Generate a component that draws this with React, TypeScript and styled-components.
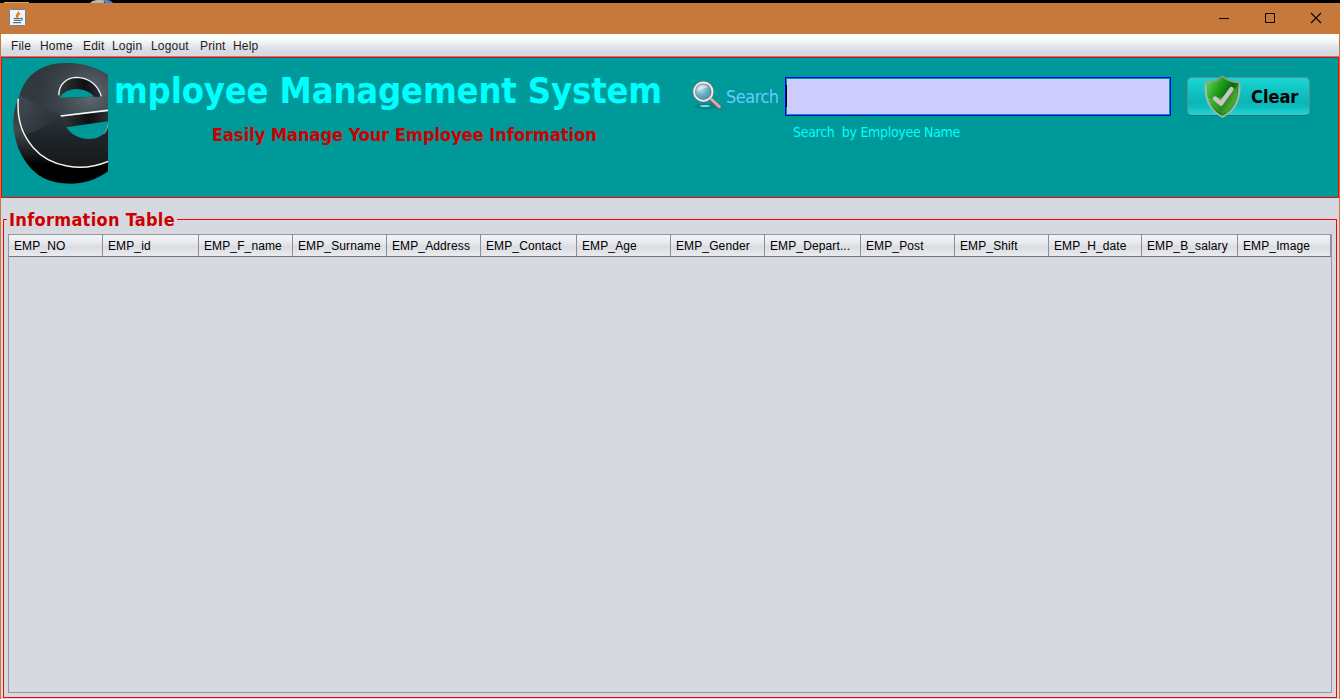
import React from "react";
import styled, { createGlobalStyle } from "styled-components";

const GlobalStyle = createGlobalStyle`
  * { box-sizing: border-box; }
  body { margin: 0; background: #000; overflow: hidden; }
`;

const tahoma = `"DejaVu Sans Condensed", "DejaVu Sans", sans-serif`;
const arial = `"Liberation Sans", Arial, sans-serif`;

const Desktop = styled.div`
  width: 1340px;
  height: 699px;
  padding-top: 3px;
  position: relative;
  background: #000;
`;

const DesktopPeek = styled.svg`
  position: absolute;
  top: 0;
  left: 0;
`;

const Window = styled.div`
  height: 696px;
  display: flex;
  flex-direction: column;
  background: #d6d9df;
  border: solid #c6793b;
  border-width: 0 1px;
`;

const TitleBar = styled.header`
  height: 31px;
  flex: none;
  display: flex;
  align-items: center;
  justify-content: space-between;
  background: #c6793b;
  padding: 0 17px 2px 8px;
`;

const Controls = styled.div`
  display: flex;
  gap: 34px;
`;

const MenuBar = styled.nav`
  height: 23px;
  flex: none;
  display: flex;
  border-bottom: 1px solid #8e8f93;
  background: linear-gradient(#fff 0%, #f6f7f8 30%, #d8dbe1 75%, #d6d9df 100%);
`;

const MenuItem = styled.span<{ $width: number }>`
  width: ${(p) => p.$width}px;
  font: 12px/25px ${arial};
  letter-spacing: 0.18px;
  color: #1c1c1c;
  white-space: nowrap;
  &:first-child { margin-left: 10px; }
`;

const Banner = styled.section`
  height: 141px;
  flex: none;
  display: flex;
  background: #009999;
  border: 1px solid #f00;
  padding: 4px 0 0 10px;
`;

const Heading = styled.div`
  width: 583px;
  padding: 6px 0 0 6px;
`;

const Title = styled.h1`
  margin: 0;
  font: bold 36px/46px ${tahoma};
  letter-spacing: -0.13px;
  color: #0ff;
  white-space: nowrap;
`;

const Subtitle = styled.p`
  margin: 8px 0 0 98px;
  font: bold 18px/26px ${tahoma};
  color: #cc0000;
  white-space: nowrap;
`;

const SearchLabel = styled.label`
  display: flex;
  width: 94px;
  height: 32px;
  margin-top: 17px;
  font: 18px/36px ${tahoma};
  letter-spacing: -0.5px;
  color: #66ccff;
`;

const SearchIcon = styled.svg`
  flex: none;
  margin: 1px 3px 0 0;
`;

const SearchColumn = styled.div`
  width: 386px;
  margin: 15px 16px 0 0;
`;

const SearchField = styled.div`
  height: 39px;
  border: 1px solid #0000f0;
  padding: 1px;
  background: linear-gradient(#ccccff, #ccccff) content-box #009999;
  background-clip: content-box, border-box;
  position: relative;
`;

const Caret = styled.i`
  position: absolute;
  left: 0;
  top: 7px;
  width: 1px;
  height: 22px;
  background: #000;
`;

const Hint = styled.p`
  margin: 6px 0 0 8px;
  font: 14px/20px ${tahoma};
  letter-spacing: -0.3px;
  color: #0ff;
  white-space: pre;
`;

const ClearButton = styled.button`
  width: 123px;
  height: 39px;
  margin-top: 15px;
  padding: 0 0 0 16px;
  display: flex;
  align-items: center;
  border: 1px solid #5d8e90;
  border-bottom-color: #3f6265;
  border-radius: 5px;
  background: linear-gradient(#1bd6d6 0%, #12c6c6 30%, #0db5b5 65%, #10bcbc 78%, #1cdada 100%);
  font: bold 18px/20px ${tahoma};
  color: #000;
`;

const Shield = styled.svg`
  flex: none;
  margin: -1px 10px 0 0;
`;

const Group = styled.fieldset`
  flex: none;
  height: 489px;
  margin: 11px 2px 0;
  padding: 5px 4px 0;
  min-width: 0;
  border: 1px solid #f00;
`;

const GroupTitle = styled.legend`
  width: 170px;
  height: 20px;
  margin-left: -1px;
  padding: 0 0 0 2px;
  font: bold 18px/22px ${tahoma};
  letter-spacing: 0.3px;
  color: #cc0000;
  white-space: nowrap;
`;

const Table = styled.div`
  height: 459px;
  border: 1px solid #9297a1;
`;

const TableHead = styled.div`
  height: 22px;
  display: flex;
  border-bottom: 1px solid #6f737c;
  background: linear-gradient(#f4f5f7 0%, #e4e6ea 45%, #d9dce1 55%, #e9ebef 100%);
`;

const HeadCell = styled.span<{ $width: number }>`
  flex: none;
  width: ${(p) => p.$width}px;
  padding-left: 5px;
  border-right: 1px solid #8b8f97;
  font: 12px/23px ${arial};
  letter-spacing: 0.12px;
  height: 21px;
  color: #000;
  white-space: nowrap;
`;

const menus: [string, number][] = [
  ["File", 29], ["Home", 43], ["Edit", 29], ["Login", 39], ["Logout", 49], ["Print", 33], ["Help", 40],
];

const columns: [string, number][] = [
  ["EMP_NO", 94], ["EMP_id", 96], ["EMP_F_name", 94], ["EMP_Surname", 94], ["EMP_Address", 94],
  ["EMP_Contact", 96], ["EMP_Age", 94], ["EMP_Gender", 94], ["EMP_Depart...", 96], ["EMP_Post", 94],
  ["EMP_Shift", 94], ["EMP_H_date", 93], ["EMP_B_salary", 96], ["EMP_Image", 93],
];

const JavaIcon = () => (
  <svg width="17" height="17" viewBox="0 0 17 17">
    <rect x="0.5" y="0.5" width="16" height="16" rx="1" fill="#f2f3f3" stroke="#6c8497" />
    <path d="M9.5 2.5C10 5 6 5 7.5 8.5M11 4.5C8 6 9 7 8.5 9" fill="none" stroke="#e8791d" strokeWidth="1.4" />
    <path d="M4.5 9.5h7M5 11.4h6M4 13.6h8M11.5 9.2c2.5-.6 2.5 2-.3 2.4" fill="none" stroke="#557793" strokeWidth="1.1" />
  </svg>
);

const LogoDrawing = styled.svg`
  flex: none;
`;

const Logo = () => (
  <LogoDrawing width="96" height="124" viewBox="36 36 288 372">
    <defs>
      <linearGradient id="face" x1="0" y1="0" x2="0" y2="1">
        <stop offset="0" stopColor="#2f373b" />
        <stop offset="0.45" stopColor="#333b41" />
        <stop offset="0.7" stopColor="#1f2529" />
        <stop offset="1" stopColor="#15191c" />
      </linearGradient>
      <linearGradient id="rim" x1="0" y1="0" x2="0" y2="1">
        <stop offset="0" stopColor="#2a3034" />
        <stop offset="0.4" stopColor="#42494b" />
        <stop offset="0.68" stopColor="#151819" />
        <stop offset="0.78" stopColor="#000" />
      </linearGradient>
      <radialGradient id="sheen" gradientUnits="userSpaceOnUse" cx="270" cy="130" r="170">
        <stop offset="0" stopColor="#6b777f" stopOpacity="0.85" />
        <stop offset="1" stopColor="#3a4349" stopOpacity="0" />
      </radialGradient>
      <linearGradient id="wedge" x1="0" y1="0" x2="1" y2="0.3">
        <stop offset="0" stopColor="#454d57" />
        <stop offset="1" stopColor="#2b3238" />
      </linearGradient>
      <linearGradient id="bar" x1="0" y1="0" x2="1" y2="0">
        <stop offset="0" stopColor="#343a3c" />
        <stop offset="0.6" stopColor="#0d0f10" />
        <stop offset="1" stopColor="#2c3133" />
      </linearGradient>
    </defs>
    <path d="M60 135C44 165 38 200 41 235C48 305 85 360 130 384C185 410 265 409 324 364V200H60Z" fill="url(#rim)" />
    <path d="M58 138C75 75 125 39 195 39C250 38 295 54 324 75V333C245 366 150 356 96 292C58 245 50 200 55 150Z" fill="url(#face)" />
    <path d="M58 138C75 75 125 39 195 39C250 38 295 54 324 75V181L182 198Z" fill="url(#sheen)" />
    <path d="M57 136L182 197C150 222 118 240 80 252C58 220 50 180 57 136Z" fill="url(#wedge)" opacity="0.75" />
    <path d="M55 146C50 205 66 255 100 293C150 351 245 368 324 334" fill="none" stroke="#f2f2f2" strokeWidth="4.5" />
    <path d="M177 143C172 108 197 81 231 81C268 82 292 105 303 140L178 143Z" fill="url(#bar)" />
    <path d="M177 136C175 105 199 82 231 82C267 83 294 105 304 139" fill="none" stroke="#f4f4f4" strokeWidth="4" />
    <path d="M178 143C192 125 209 117 230 117C252 118 271 126 282 140Z" fill="#009999" />
    <path d="M182 198L324 181V214L200 232Z" fill="url(#bar)" />
    <path d="M182 198L324 181" stroke="#fff" strokeWidth="5" />
    <path d="M199 232L324 214V225C319 254 296 267 267 267C238 267 215 256 199 232Z" fill="#009999" />
    <path d="M324 223C322 238 317 246 311 252" fill="none" stroke="#c9d6d6" strokeWidth="2" />
  </LogoDrawing>
);

const Magnifier = () => (
  <SearchIcon width="32" height="32" viewBox="0 0 32 32">
    <defs>
      <radialGradient id="lens" cx="0.35" cy="0.3" r="0.8">
        <stop offset="0" stopColor="#c5e2ea" />
        <stop offset="0.5" stopColor="#6aaec4" />
        <stop offset="1" stopColor="#2a88a3" />
      </radialGradient>
    </defs>
    <ellipse cx="15" cy="26.5" rx="12" ry="3" fill="#007777" opacity="0.6" />
    <ellipse cx="14" cy="26" rx="5" ry="1.1" fill="#7fe0e0" />
    <path d="M20 19.5L28.3 27" stroke="#6d5f5f" strokeWidth="5" strokeLinecap="round" />
    <path d="M19.5 18.5L28.3 26.7" stroke="#bdb6b4" strokeWidth="3" strokeLinecap="round" />
    <circle cx="12.3" cy="11.7" r="9.2" fill="url(#lens)" stroke="#8d7777" strokeWidth="2.8" />
    <circle cx="12.3" cy="11.7" r="9.2" fill="none" stroke="#f1eeee" strokeWidth="1.8" />
    <path d="M6.5 12A6 6 0 0 1 17 7.5C13 8 9.5 9 6.5 12Z" fill="#fff" opacity="0.45" />
  </SearchIcon>
);

const ShieldIcon = () => (
  <Shield width="37" height="43" viewBox="0 0 37 43">
    <defs>
      <linearGradient id="green" x1="0" y1="0" x2="1" y2="0.6">
        <stop offset="0" stopColor="#7ddc62" />
        <stop offset="0.45" stopColor="#199a18" />
        <stop offset="0.7" stopColor="#07690a" />
        <stop offset="1" stopColor="#49b03a" />
      </linearGradient>
      <linearGradient id="metal" x1="0" y1="0" x2="0" y2="1">
        <stop offset="0" stopColor="#5f9b79" />
        <stop offset="0.3" stopColor="#a9bdb4" />
        <stop offset="1" stopColor="#86bba0" />
      </linearGradient>
    </defs>
    <path d="M18.5 1.2C23 5 29 7 35.3 7.3C36.5 23 32 35.5 18.5 41.8C5 35.5 .5 23 1.7 7.3C8 7 14 5 18.5 1.2Z" fill="url(#green)" stroke="url(#metal)" strokeWidth="2" />
    <path d="M3.5 23C14 25 26 20 33.5 11C33.5 24 29 34 18.5 39.5C10 35 5 29 3.5 23Z" fill="#8be05a" opacity="0.28" />
    <path d="M11 23.5L17 28.5L27.5 14" fill="none" stroke="#c9c5cb" strokeWidth="4.4" strokeLinecap="round" strokeLinejoin="round" />
  </Shield>
);

export default function App() {
  return (
    <Desktop>
      <GlobalStyle />
      <DesktopPeek width="140" height="3">
        <rect x="4" y="2" width="25" height="1" fill="#d5ae42" />
        <path d="M90 3C93 0 96 0 98 0H104V3Z" fill="#b9b79c" />
        <path d="M103 0H107C110 0 112 2 113 3H105Z" fill="#4a86d8" />
      </DesktopPeek>
      <Window>
        <TitleBar>
          <JavaIcon />
          <Controls>
            <svg width="12" height="12"><path d="M1 6.5H11" stroke="#000" /></svg>
            <svg width="12" height="12"><path d="M1.5 1.5H10.5V10.5H1.5Z" fill="none" stroke="#000" /></svg>
            <svg width="12" height="12"><path d="M1 1L11 11M11 1L1 11" stroke="#000" strokeWidth="1.1" /></svg>
          </Controls>
        </TitleBar>
        <MenuBar>
          {menus.map(([name, width]) => (
            <MenuItem key={name} $width={width}>{name}</MenuItem>
          ))}
        </MenuBar>
        <Banner>
          <Logo />
          <Heading>
            <Title>mployee Management System</Title>
            <Subtitle>Easily Manage Your Employee Information</Subtitle>
          </Heading>
          <SearchLabel><Magnifier />Search</SearchLabel>
          <SearchColumn>
            <SearchField><Caret /></SearchField>
            <Hint>{"Search  by Employee Name"}</Hint>
          </SearchColumn>
          <ClearButton><ShieldIcon />Clear</ClearButton>
        </Banner>
        <Group>
          <GroupTitle>Information Table</GroupTitle>
          <Table>
            <TableHead>
              {columns.map(([name, width]) => (
                <HeadCell key={name} $width={width}>{name}</HeadCell>
              ))}
            </TableHead>
          </Table>
        </Group>
      </Window>
    </Desktop>
  );
}
